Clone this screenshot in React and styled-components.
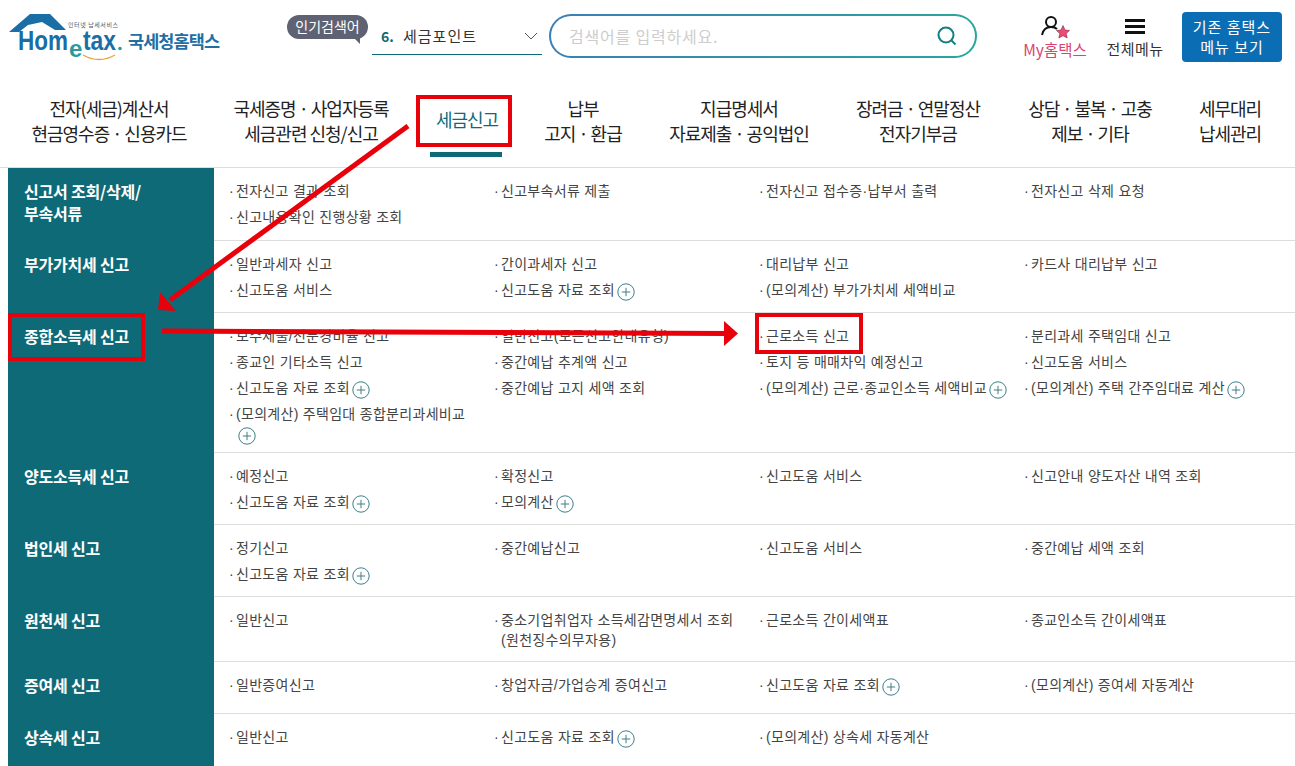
import React from 'react';
import styled, { createGlobalStyle } from 'styled-components';

const TEAL = '#0f6a78';
const FONT = '"Noto Sans CJK KR", "Noto Sans", sans-serif';
const LATIN = "'Liberation Sans', sans-serif";

const navItems = [
    { w: 218, lines: ['전자(세금)계산서', '현금영수증 · 신용카드'] },
    { w: 186, lines: ['국세증명 · 사업자등록', '세금관련 신청/신고'] },
    { w: 126, lines: ['세금신고'], active: true },
    { w: 106, lines: ['납부', '고지 · 환급'] },
    { w: 206, lines: ['지급명세서', '자료제출 · 공익법인'] },
    { w: 152, lines: ['장려금 · 연말정산', '전자기부금'] },
    { w: 192, lines: ['상담 · 불복 · 고충', '제보 · 기타'] },
    { w: 88, lines: ['세무대리', '납세관리'] },
];

const rows = [
    { h: 73, title: ['신고서 조회/삭제/', '부속서류'], items: [['전자신고 결과 조회'], ['신고부속서류 제출'], ['전자신고 접수증·납부서 출력'], ['전자신고 삭제 요청'], ['신고내용확인 진행상황 조회']] },
    { h: 72, title: ['부가가치세 신고'], items: [['일반과세자 신고'], ['간이과세자 신고'], ['대리납부 신고'], ['카드사 대리납부 신고'], ['신고도움 서비스'], ['신고도움 자료 조회', true], ['(모의계산) 부가가치세 세액비교']] },
    { h: 140, title: ['종합소득세 신고'], items: [['보수제출/전문경비율 신고'], ['일반신고(모든신고안내유형)'], ['근로소득 신고'], ['분리과세 주택임대 신고'], ['종교인 기타소득 신고'], ['중간예납 추계액 신고'], ['토지 등 매매차익 예정신고'], ['신고도움 서비스'], ['신고도움 자료 조회', true], ['중간예납 고지 세액 조회'], ['(모의계산) 근로·종교인소득 세액비교', true], ['(모의계산) 주택 간주임대료 계산', true], ['(모의계산) 주택임대 종합분리과세비교', true]] },
    { h: 72, title: ['양도소득세 신고'], items: [['예정신고'], ['확정신고'], ['신고도움 서비스'], ['신고안내 양도자산 내역 조회'], ['신고도움 자료 조회', true], ['모의계산', true]] },
    { h: 72, title: ['법인세 신고'], items: [['정기신고'], ['중간예납신고'], ['신고도움 서비스'], ['중간예납 세액 조회'], ['신고도움 자료 조회', true]] },
    { h: 65, title: ['원천세 신고'], items: [['일반신고'], ['중소기업취업자 소득세감면명세서 조회 (원천징수의무자용)'], ['근로소득 간이세액표'], ['종교인소득 간이세액표']] },
    { h: 52, title: ['증여세 신고'], items: [['일반증여신고'], ['창업자금/가업승계 증여신고'], ['신고도움 자료 조회', true], ['(모의계산) 증여세 자동계산']] },
    { h: 52, title: ['상속세 신고'], items: [['일반신고'], ['신고도움 자료 조회', true], ['(모의계산) 상속세 자동계산']], last: true },
];

function PlusIcon() {
    return (
        <PlusSvg viewBox="0 0 18 18">
            <circle cx="9" cy="9" r="8.2" fill="none" stroke="#3f7f8a" strokeWidth="1" />
            <path d="M9 4.8v8.4M4.8 9h8.4" stroke="#3f7f8a" strokeWidth="1" />
        </PlusSvg>
    );
}

function Logo() {
    return (
        <LogoSvg viewBox="0 0 215 54">
            <path d="M1 20 L22 2 L42 2 L58 18 L47 18 L34 10 L20 13 L11 20 Z" fill="#1a6ea6" />
            <text x="60" y="15" fontFamily={FONT} fontSize="6" fill="#44606f" textLength="50">인터넷 납세서비스</text>
            <text x="10" y="38" fontFamily={LATIN} fontWeight="700" fontSize="27" fill="#1a6ea6" textLength="50" lengthAdjust="spacingAndGlyphs">Hom</text>
            <text x="61" y="45" fontFamily={LATIN} fontWeight="700" fontSize="24" fill="#2a9aa0">e</text>
            <text x="75" y="38" fontFamily={LATIN} fontWeight="700" fontSize="27" fill="#1a6ea6" textLength="33" lengthAdjust="spacingAndGlyphs">tax</text>
            <circle cx="112" cy="36.5" r="1.8" fill="#2a9aa0" />
            <path d="M75 43 Q91 52 107 43" fill="none" stroke="#e8a33d" strokeWidth="1.4" />
            <text x="120" y="36" fontFamily={FONT} fontWeight="700" fontSize="17.5" fill="#1f6fa5" textLength="92">국세청홈택스</text>
        </LogoSvg>
    );
}

function Annotations() {
    return (
        <Overlay viewBox="0 0 1295 766">
            <g fill="none" stroke="#e8000b" strokeWidth="4">
                <rect x="418" y="97" width="92" height="48" />
                <rect x="10" y="315" width="133" height="44" />
                <rect x="757" y="315" width="104" height="37" />
            </g>
            <g stroke="#e8000b" strokeWidth="5">
                <line x1="408" y1="126" x2="170" y2="300" />
                <line x1="162" y1="331" x2="726" y2="333.5" />
            </g>
            <polygon points="158,310 160,292 176,311" fill="#e8000b" />
            <polygon points="738,333.5 724,321 724,346" fill="#e8000b" />
        </Overlay>
    );
}

function App() {
    return (
        <Page>
            <GlobalStyle />
            <Header>
                <Logo />
                <PopularBadge>인기검색어</PopularBadge>
                <Ranking>
                    <RankNumber>6.</RankNumber>
                    <RankText>세금포인트</RankText>
                    <svg width="14" height="8" viewBox="0 0 14 8"><path d="M1 1l6 6 6-6" fill="none" stroke="#555" strokeWidth="1" /></svg>
                </Ranking>
                <SearchBox>
                    <Placeholder>검색어를 입력하세요.</Placeholder>
                    <svg width="22" height="22" viewBox="0 0 22 22">
                        <circle cx="10" cy="10" r="7.5" fill="none" stroke="#14807f" strokeWidth="2" />
                        <path d="M15.5 15.5l4 4" stroke="#14807f" strokeWidth="2" />
                    </svg>
                </SearchBox>
                <MyHome>
                    <svg width="30" height="24" viewBox="0 0 30 24">
                        <circle cx="11" cy="7" r="5" fill="none" stroke="#111" strokeWidth="2" />
                        <path d="M2 20c1-5 4-8 9-8 3 0 5 1 6 2" fill="none" stroke="#111" strokeWidth="2" />
                        <polygon points="23,10.5 25,15 29.5,15.5 26.2,18.5 27.2,23 23,20.7 18.8,23 19.8,18.5 16.5,15.5 21,15" fill="#ee4a78" stroke="#7a2b3e" strokeWidth="0.6" />
                    </svg>
                    <MyLabel>My홈택스</MyLabel>
                </MyHome>
                <AllMenu>
                    <Burger><i /><i /><i /></Burger>
                    <AllMenuLabel>전체메뉴</AllMenuLabel>
                </AllMenu>
                <OldMenuButton>기존 홈택스<br />메뉴 보기</OldMenuButton>
            </Header>

            <Nav>
                {navItems.map((n) => (
                    <NavItem key={n.lines[0]} $w={n.w} $active={n.active}>
                        {n.lines.map((l) => <div key={l}>{l}</div>)}
                    </NavItem>
                ))}
            </Nav>

            <Table>
                {rows.map((r) => (
                    <Row key={r.title[0]} $h={r.h}>
                        <RowTitle>
                            {r.title.map((t) => <div key={t}>{t}</div>)}
                        </RowTitle>
                        <Items $last={r.last}>
                            {r.items.map(([text, plus]) => (
                                <Item key={text}>
                                    {text}
                                    {plus && <PlusIcon />}
                                </Item>
                            ))}
                        </Items>
                    </Row>
                ))}
            </Table>
            <Annotations />
        </Page>
    );
}

const GlobalStyle = createGlobalStyle`
    html, body {
        margin: 0;
        padding: 0;
        background: #fff;
        font-family: ${FONT};
    }
`;
const Page = styled.div`
    position: relative;
    width: 1295px;
    height: 766px;
    overflow: hidden;
`;
const Header = styled.div`
    display: flex;
    align-items: flex-start;
    height: 81px;
`;
const LogoSvg = styled.svg`
    width: 215px;
    height: 54px;
    margin: 12px 0 0 8px;
    flex: none;
`;
const PopularBadge = styled.div`
    position: relative;
    width: 81px;
    height: 24px;
    margin: 15px 0 0 64px;
    border-radius: 12px;
    background: #5f6272;
    color: #fff;
    font-size: 14px;
    line-height: 23px;
    text-align: center;
    flex: none;
    &::after {
        content: '';
        position: absolute;
        right: 8px;
        bottom: -5px;
        border-top: 6px solid #5f6272;
        border-left: 6px solid transparent;
    }
`;
const Ranking = styled.div`
    display: flex;
    align-items: center;
    width: 170px;
    height: 38px;
    margin: 17px 0 0 4px;
    padding: 0 4px 0 9px;
    box-sizing: border-box;
    border-bottom: 1px solid ${TEAL};
    flex: none;
    svg {
        margin-left: auto;
    }
`;
const RankNumber = styled.span`
    color: ${TEAL};
    font-size: 14px;
    font-weight: 700;
    width: 22px;
`;
const RankText = styled.span`
    color: #333;
    font-size: 15px;
    letter-spacing: 1px;
`;
const SearchBox = styled.div`
    display: flex;
    align-items: center;
    justify-content: space-between;
    width: 428px;
    height: 44px;
    margin: 14px 0 0 7px;
    padding: 0 17px 0 18px;
    box-sizing: border-box;
    border: 2px solid transparent;
    border-radius: 22px;
    background: linear-gradient(#fff, #fff) padding-box, linear-gradient(90deg, #3b7fb6, #2ba59c) border-box;
    flex: none;
`;
const Placeholder = styled.span`
    color: #cdcdcd;
    font-size: 16px;
    letter-spacing: 0.8px;
`;
const MyHome = styled.div`
    display: flex;
    flex-direction: column;
    align-items: center;
    width: 68px;
    margin: 15px 0 0 44px;
    flex: none;
`;
const MyLabel = styled.span`
    color: #d8456f;
    font-size: 15.5px;
    line-height: 20px;
    white-space: nowrap;
`;
const AllMenu = styled.div`
    display: flex;
    flex-direction: column;
    align-items: center;
    width: 62px;
    margin: 19px 0 0 15px;
    flex: none;
`;
const Burger = styled.div`
    display: flex;
    flex-direction: column;
    gap: 3px;
    width: 20px;
    height: 20px;
    i {
        display: block;
        height: 3px;
        background: #111;
    }
`;
const AllMenuLabel = styled.span`
    color: #333;
    font-size: 15px;
    line-height: 20px;
    letter-spacing: 0.4px;
    white-space: nowrap;
`;
const OldMenuButton = styled.div`
    width: 100px;
    height: 50px;
    margin: 12px 0 0 16px;
    border-radius: 4px;
    background: #0b6eb5;
    color: #fff;
    font-size: 15px;
    line-height: 20px;
    padding-top: 5px;
    box-sizing: border-box;
    text-align: center;
    letter-spacing: 1px;
    flex: none;
`;
const Nav = styled.div`
    display: flex;
    height: 86px;
    border-bottom: 1px solid #ddd;
    box-sizing: content-box;
`;
const NavItem = styled.div`
    position: relative;
    width: ${(p) => p.$w}px;
    padding-top: ${(p) => (p.$active ? 26 : 15)}px;
    text-align: center;
    color: ${(p) => (p.$active ? TEAL : '#222')};
    font-size: 18px;
    line-height: 25px;
    letter-spacing: -1px;
    white-space: nowrap;
    flex: none;
    box-sizing: border-box;
    ${(p) => p.$active && `
        &::after {
            content: '';
            position: absolute;
            left: 26px;
            bottom: 10px;
            width: 72px;
            height: 5px;
            background: ${TEAL};
        }
    `}
`;
const Table = styled.div`
    display: flex;
    flex-direction: column;
    margin-left: 8px;
    width: 1287px;
`;
const Row = styled.div`
    display: grid;
    grid-template-columns: 206px 1fr;
    height: ${(p) => p.$h}px;
`;
const RowTitle = styled.div`
    background: ${TEAL};
    color: #fff;
    font-size: 16px;
    font-weight: 700;
    line-height: 22px;
    letter-spacing: -0.2px;
    padding: 12px 0 0 16px;
`;
const Items = styled.div`
    display: grid;
    grid-template-columns: repeat(4, 265px);
    align-content: start;
    row-gap: 6px;
    padding: 13px 0 0 15px;
    border-bottom: ${(p) => (p.$last ? 'none' : '1px solid #ddd')};
`;
const Item = styled.div`
    width: 250px;
    height: fit-content;
    padding-left: 7px;
    box-sizing: border-box;
    text-indent: -7px;
    color: #444;
    font-family: "Liberation Sans", "Noto Sans CJK KR", sans-serif;
    font-size: 14px;
    line-height: 20px;
    letter-spacing: 0.3px;
    &::before {
        content: '·';
        display: inline-block;
        width: 7px;
        text-indent: 0;
        letter-spacing: 0;
    }
`;
const PlusSvg = styled.svg`
    width: 18px;
    height: 18px;
    margin: -3px 0 -3px 2px;
    vertical-align: -3px;
`;
const Overlay = styled.svg`
    position: absolute;
    left: 0;
    top: 0;
    width: 1295px;
    height: 766px;
    pointer-events: none;
`;

export default App
